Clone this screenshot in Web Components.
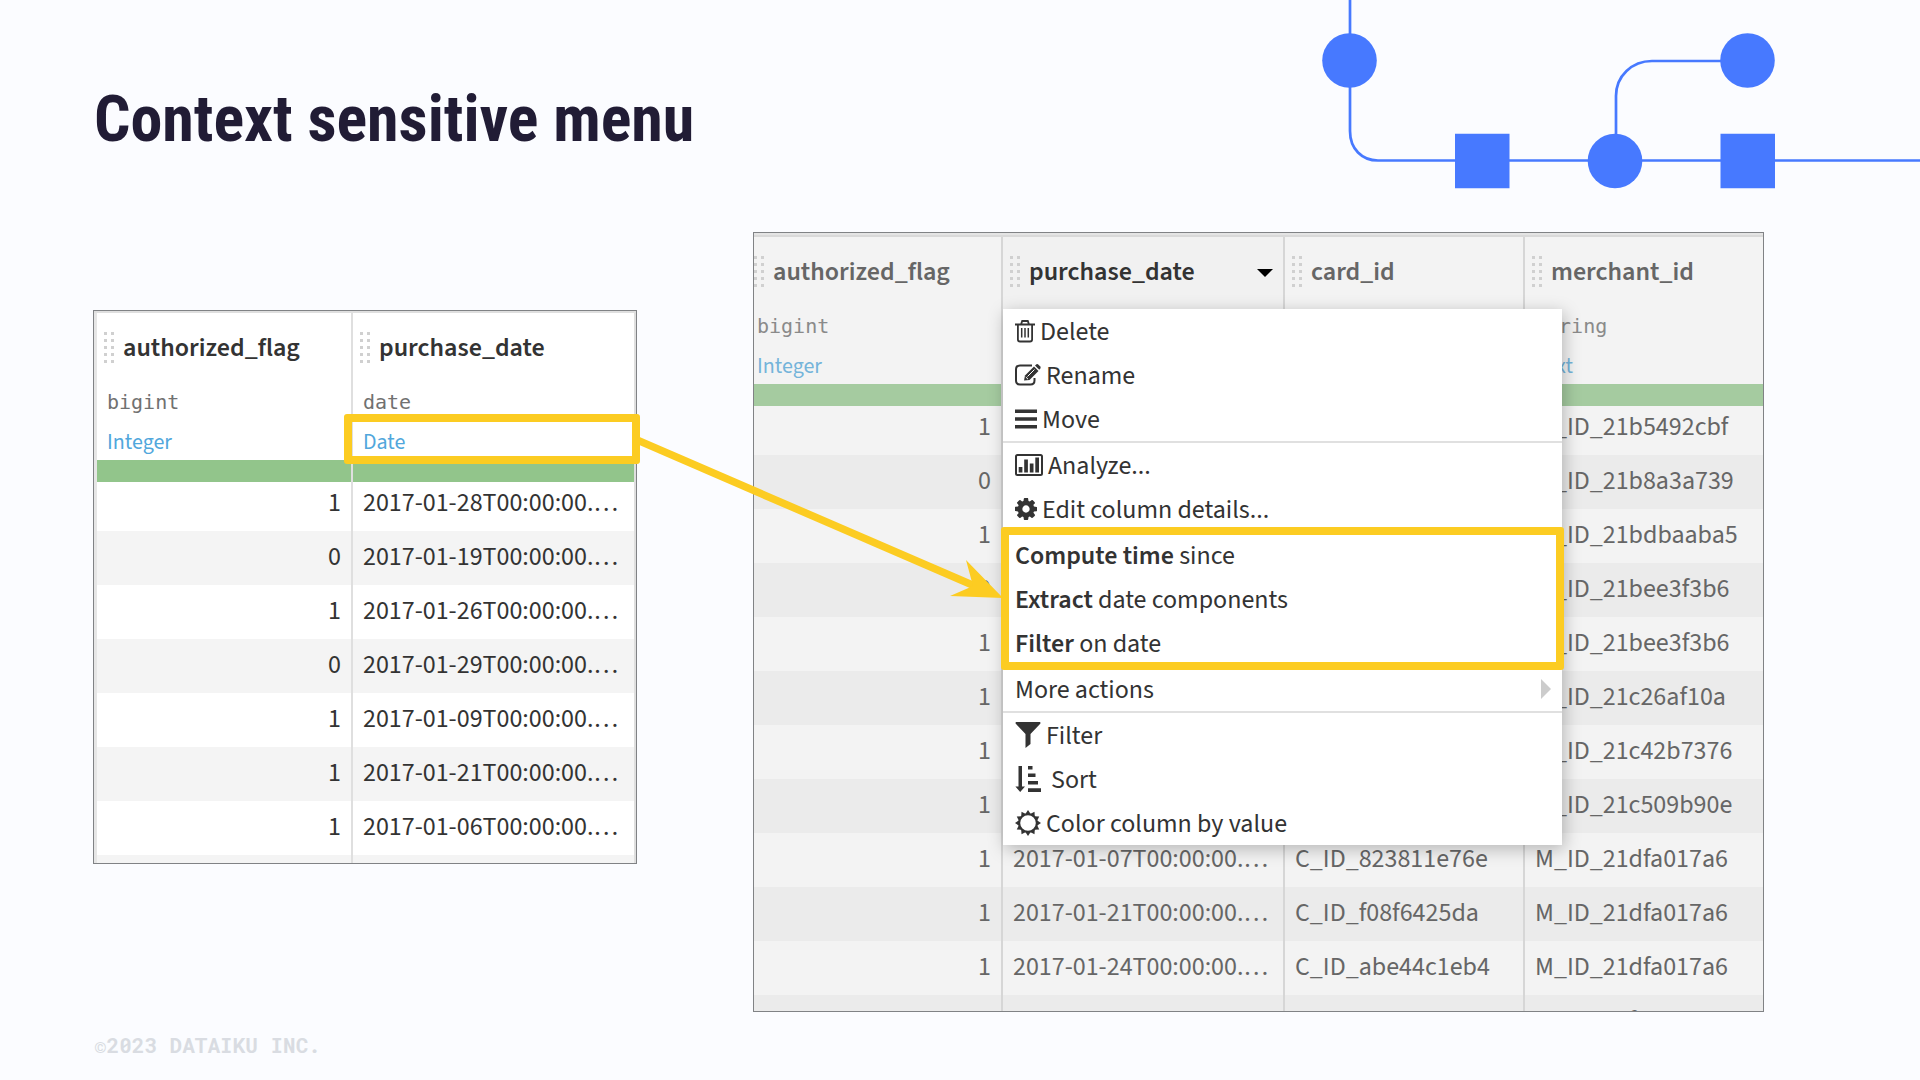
<!DOCTYPE html>
<html lang="en">
<head>
<meta charset="utf-8">
<title>Context sensitive menu</title>
<style>
  html, body { margin: 0; height: 100%; }
  body { background: #fbfcff; font-family: "Source Sans 3", "Noto Sans CJK SC", sans-serif; overflow: hidden; }
</style>
</head>
<body>
<slide-page>
  <h1 slot="title">Context sensitive menu</h1>
  <flow-art slot="art"></flow-art>
  <callout-frame slot="left">
    <data-grid data-source="before"></data-grid>
  </callout-frame>
  <data-grid slot="right" data-source="after" dimmed>
    <context-menu>
      <menu-group>
        <menu-item icon="trash">Delete</menu-item>
        <menu-item icon="edit">Rename</menu-item>
        <menu-item icon="bars">Move</menu-item>
      </menu-group>
      <menu-group>
        <menu-item icon="chart">Analyze...</menu-item>
        <menu-item icon="cog">Edit column details...</menu-item>
      </menu-group>
      <menu-group highlighted>
        <menu-item><b>Compute time</b> since</menu-item>
        <menu-item><b>Extract</b> date components</menu-item>
        <menu-item><b>Filter</b> on date</menu-item>
      </menu-group>
      <menu-group>
        <menu-item submenu>More actions</menu-item>
      </menu-group>
      <menu-group>
        <menu-item icon="funnel">Filter</menu-item>
        <menu-item icon="sort">Sort</menu-item>
        <menu-item icon="sun">Color column by value</menu-item>
      </menu-group>
    </context-menu>
  </data-grid>
  <span slot="footer">©2023 DATAIKU INC.</span>
</slide-page>

<script>
const define = (name, render) => customElements.define(name, class extends HTMLElement {
  connectedCallback() {
    if (this.shadowRoot) return;
    this.attachShadow({ mode: 'open' }).innerHTML = render(this);
  }
});

define('slide-page', () => `
  <style>
    :host { display: flex; flex-direction: column; min-height: 100%; color: #333; }
    header { display: flex; justify-content: space-between; align-items: flex-start; padding-left: 94px; height: 200px; }
    ::slotted(h1) { margin: 82px 0 0; font: 700 64px/76px "Roboto Condensed", Roboto, sans-serif; color: #211c35; }
    main { display: flex; align-items: flex-start; gap: 116px; padding: 32px 156px 0 93px; }
    .left { flex: 544 1 0; min-width: 0; margin-top: 78px; position: relative; z-index: 1; }
    .right { flex: 1011 1 0; min-width: 0; }
    footer { padding: 19px 94px; font: 700 21px/28px "Roboto Mono", "Liberation Mono", monospace; color: #d9dce2; }
  </style>
  <header><slot name="title"></slot><slot name="art"></slot></header>
  <main>
    <div class="left"><slot name="left"></slot></div>
    <div class="right"><slot name="right"></slot></div>
  </main>
  <footer><slot name="footer"></slot></footer>`);

define('flow-art', () => `
  <style>:host { display: block; } svg { display: block; }</style>
  <svg width="620" height="200" viewBox="0 0 620 200" fill="#4779ff" aria-hidden="true">
    <g fill="none" stroke="#4779ff" stroke-width="2.700">
      <path d="M50 0V131C50 149 62 160.500 78 160.500H620"/>
      <path d="M316 161V96C316 76 332 61 352 61H448"/>
    </g>
    <circle cx="49.500" cy="60.500" r="27.300"/>
    <circle cx="315" cy="161" r="27.300"/>
    <circle cx="447.500" cy="60.500" r="27.300"/>
    <path d="M155 133.800h54.500v54.500h-54.500zM420.500 133.800h54.500v54.500h-54.500z"/>
  </svg>`);

define('callout-frame', () => `
  <style>
    :host { display: block; position: relative; }
    .frame { position: absolute; left: 251px; right: -3px; top: 104px; height: 50px; box-sizing: border-box;
             border: 8px solid #fccc22; border-radius: 3px; }
    svg { position: absolute; left: 100%; top: 120px; }
  </style>
  <slot></slot>
  <div class="frame"></div>
  <svg width="370" height="180" viewBox="0 0 370 180" aria-hidden="true">
    <path d="M0 10L340 157" stroke="#fccc22" stroke-width="7.500"/>
    <path d="M366 168L329 130L336 156L313 166Z" fill="#fccc22"/>
  </svg>`);

const columns = {
  flag: { name: 'authorized_flag', type: 'bigint', meaning: 'Integer', num: true },
  date: { name: 'purchase_date', type: 'date', meaning: 'Date' },
  card: { name: 'card_id', type: 'string', meaning: 'Text' },
  merchant: { name: 'merchant_id', type: 'string', meaning: 'Text' }
};
const day = d => `2017-01-${d}T00:00:00.…`;
const sources = {
  before: {
    cols: ['flag', 'date'], widths: ['256px', 'auto'],
    rows: [[1, day(28)], [0, day(19)], [1, day(26)], [0, day(29)], [1, day('09')], [1, day(21)], [1, day('06')], ['', '']]
  },
  after: {
    cols: ['flag', 'date', 'card', 'merchant'], widths: ['256px', '282px', '240px', 'auto'], active: 'date',
    rows: [
      [1, '', '', 'M_ID_21b5492cbf'], [0, '', '', 'M_ID_21b8a3a739'], [1, '', '', 'M_ID_21bdbaaba5'],
      [0, '', '', 'M_ID_21bee3f3b6'], [1, '', '', 'M_ID_21bee3f3b6'], [1, '', '', 'M_ID_21c26af10a'],
      [1, '', '', 'M_ID_21c42b7376'], [1, '', '', 'M_ID_21c509b90e'],
      [1, day('07'), 'C_ID_823811e76e', 'M_ID_21dfa017a6'],
      [1, day(21), 'C_ID_f08f6425da', 'M_ID_21dfa017a6'],
      [1, day(24), 'C_ID_abe44c1eb4', 'M_ID_21dfa017a6'],
      ['', '', 'C_ID_b0ea41c72d', 'M_ID_21f0a3c7e6']
    ]
  }
};

define('data-grid', el => {
  const s = sources[el.dataset.source];
  const heads = s.cols.map(k => {
    const c = columns[k], on = k === s.active;
    return `<th scope="col" class="${on ? 'on' : ''}">
      <div class="name"><i></i><span>${c.name}</span>${on ? '<button aria-label="Column menu"><svg width="16" height="8" viewBox="0 0 16 8"><path d="M0 0H16L8 8Z" fill="#000"/></svg></button>' : ''}</div>
      <div class="type">${on || k === 'card' ? '&nbsp;' : c.type}</div>
      <div class="meaning">${on || k === 'card' ? '&nbsp;' : c.meaning}</div></th>`;
  }).join('');
  const body = s.rows.map(r => '<tr>' + r.map((v, i) =>
    `<td class="${columns[s.cols[i]].num ? 'num' : ''}">${v === '' ? '&nbsp;' : v}</td>`).join('') + '</tr>').join('');
  return `
  <style>
    :host { display: block; position: relative; color: #333;
      --bg: #fff; --alt: #f4f4f4; --line: #dfdfdf; --head: #333; --type: #717171; --link: #51a7dc; --gauge: #92c58b; }
    :host([dimmed]) { color: #666;
      --bg: #f3f3f3; --alt: #ebebeb; --line: #d6d6d6; --head: #666; --type: #8a8a8a; --link: #74b4da; --gauge: #a5cba0; }
    .view { box-sizing: border-box; height: 554px; overflow: hidden; border: 1px solid #808285; background: var(--bg); }
    .view::before { content: ""; display: block; height: 2px; background: var(--line); }
    :host([dimmed]) .view { height: 780px; }
    :host([dimmed]) .view::before { height: 4px; box-sizing: border-box; background: #e4e4e4; border-bottom: 2px solid #d9d9d9; }
    table { border-collapse: separate; border-spacing: 0; table-layout: fixed; width: 100%; }
    :host(:not([dimmed])) table { border-left: 3px solid #e6e6e6; }
    :host([dimmed]) table { margin-left: -7px; width: calc(100% + 7px); }
    th, td { padding: 0; text-align: left; border-right: 2px solid var(--line); white-space: nowrap; overflow: hidden; }
    :host([dimmed]) :is(th, td):last-child { border-right: 0; }
    th { font-weight: 400; }
    .name { display: flex; align-items: center; gap: 9px; padding: 0 10px 0 7px; height: 68px;
            font-size: 26px; font-weight: 600; color: var(--head); }
    .on .name { color: #333; }
    .on { background: #f1f1f1; }
    i { width: 10px; height: 31px;
        background: conic-gradient(from 270deg at 3px 3px, #d0d0d0 90deg, transparent 0) 0 0 / 7px 7px; }
    .name span { flex: 1; }
    button { all: unset; display: flex; padding-top: 4px; }
    .type { padding-left: 10px; font: 20px/42px "DejaVu Sans Mono", monospace; color: var(--type); }
    .meaning { padding-left: 10px; height: 37px; font-size: 22px; line-height: 39px; color: var(--link); }
    .gauge td { height: 22px; background: var(--gauge); }
    tbody td { padding: 0 10px 2px; font-size: 26px; line-height: 52px; }
    tbody tr:first-child td { line-height: 42px; padding-bottom: 7px; }
    tbody tr:nth-child(even) td { background: var(--alt); }
    tbody .num { text-align: right; }
    ::slotted(*) { position: absolute; left: 250px; top: 77px; }
  </style>
  <div class="view"><table>
    <colgroup>${s.widths.map(w => `<col style="width:${w}">`).join('')}</colgroup>
    <thead><tr>${heads}</tr><tr class="gauge">${s.cols.map(() => '<td></td>').join('')}</tr></thead>
    <tbody>${body}</tbody>
  </table></div>
  <slot></slot>`;
});

define('context-menu', () => `
  <style>
    :host { display: flex; flex-direction: column; width: 559px; background: #fff; color: #333;
            box-shadow: 2px 4px 16px rgba(0, 0, 0, .26); }
  </style>
  <slot></slot>`);

define('menu-group', () => `
  <style>
    :host { display: block; position: relative; }
    :host(:not(:last-child)) { border-bottom: 2px solid #e0e0e0; }
    :host([highlighted])::after { content: ""; position: absolute; inset: -6px -2px -5px; pointer-events: none;
            border: 8px solid #fccc22; border-radius: 3px; }
  </style>
  <slot></slot>`);

const spikes = Array.from({ length: 12 }, (_, i) =>
  `<path d="M10 4.500L13 0L16 4.500Z" transform="rotate(${i * 30} 13 13)"/>`).join('');
const icons = {
  trash: [20, 24, `<g fill="none" stroke="#333" stroke-width="1.800"><path d="M0 5.500H20M2.900 5.500V20.500Q2.900 22.500 5 22.500H15Q17.100 22.500 17.100 20.500V5.500M6 5.500L7.200 2H12.800L14 5.500"/><path d="M6.700 9V18.500M10 9V18.500M13.300 9V18.500" stroke-width="1.500"/></g>`],
  edit: [26, 22, `<path d="M17 1.500H5Q1 1.500 1 5.500V16.500Q1 20.500 5 20.500H15.500Q19.500 20.500 19.500 16.500V14" fill="none" stroke="#333" stroke-width="2"/><path d="M9 16.500L10 11.500L19 2.500L23.500 7L14.500 16Z"/><path d="M20 1.500L21.500 0.300Q22.500 -.3 23.500 .7L25.300 2.500Q26 3.500 25.300 4.500L24.300 5.800Z"/><path d="M12.500 12.500L19.500 5.500M10.800 13L13 15.200" stroke="#fff" stroke-width="1"/>`],
  bars: [22, 20, `<path d="M0 .5h22v3.600H0zM0 8.200h22v3.600H0zM0 16h22v3.600H0z"/>`],
  chart: [28, 22, `<rect x="1" y="1" width="26" height="20" rx="1.500" fill="none" stroke="#333" stroke-width="2"/><path d="M3.700 13h3.700v5.500H3.700zM9.200 5.500h3.700v13H9.200zM14.800 9.500h3.700v9h-3.700zM20.300 3.500H24v15h-3.700z"/>`],
  cog: [22, 22, `<path transform="scale(.01432) translate(-128 -128)" d="M1152 896q0-106-75-181t-181-75-181 75-75 181 75 181 181 75 181-75 75-181zm512-109v222q0 12-8 23t-20 13l-185 28q-19 54-39 91 35 50 107 138 10 12 10 25t-9 23q-27 37-99 108t-94 71q-12 0-26-9l-138-108q-44 23-91 38-16 136-29 186-7 28-36 28h-222q-14 0-24.500-8.500t-11.500-21.500l-28-184q-49-16-90-37l-141 107q-10 9-25 9-14 0-25-11-126-114-165-168-7-10-7-23 0-12 8-23 15-21 51-66.500t54-70.500q-27-50-41-99l-183-27q-13-2-21-12.500t-8-23.500v-222q0-12 8-23t19-13l186-28q14-46 39-92-40-57-107-138-10-12-10-24 0-10 9-23 26-36 98.500-107.500t94.500-71.500q13 0 26 10l138 107q44-23 91-38 16-136 29-186 7-28 36-28h222q14 0 24.500 8.500t11.500 21.500l28 184q49 16 90 37l142-107q9-9 24-9 13 0 25 10 129 119 165 170 7 8 7 22 0 12-8 23-15 21-51 66.500t-54 70.500q26 50 41 98l183 28q13 2 21 12.500t8 23.500z"/>`],
  funnel: [26, 26, `<path d="M1 0H25Q26 1 25 2L15.500 12V22L10.500 26V12L1 2Q0 1 1 0Z"/>`],
  sort: [31, 26, `<path d="M3.500 0H7V20.500H10L5.200 26L.4 20.500H3.500zM13 0h4.500v3.500H13zM13 7.500h7.500V11H13zM13 15h10v3.500H13zM13 22.300h13V26H13z"/>`],
  sun: [26, 26, `${spikes}<circle cx="13" cy="13" r="8.800" fill="#fff" stroke="#333" stroke-width="2"/>`]
};

define('menu-item', el => {
  const ic = icons[el.getAttribute('icon')];
  return `
  <style>
    :host { display: block; }
    button { all: unset; box-sizing: border-box; display: flex; align-items: center; gap: 5px; width: 100%; height: 44px;
             padding: 0 11px 0 12px; font-size: 26px; }
    svg { display: block; flex: none; overflow: visible; }
    span { flex: 1; white-space: pre; }
    ::slotted(b) { font-weight: 600; }
  </style>
  <button type="button">${ic ? `<svg width="${ic[0]}" height="${ic[1]}" viewBox="0 0 ${ic[0]} ${ic[1]}" fill="#333" aria-hidden="true">${ic[2]}</svg>` : ''}<span><slot></slot></span>${
    el.hasAttribute('submenu') ? '<svg width="10" height="20" viewBox="0 0 10 20"><path d="M0 0L10 10L0 20Z" fill="#ccc"/></svg>' : ''}</button>`;
});
</script>
</body>
</html>
